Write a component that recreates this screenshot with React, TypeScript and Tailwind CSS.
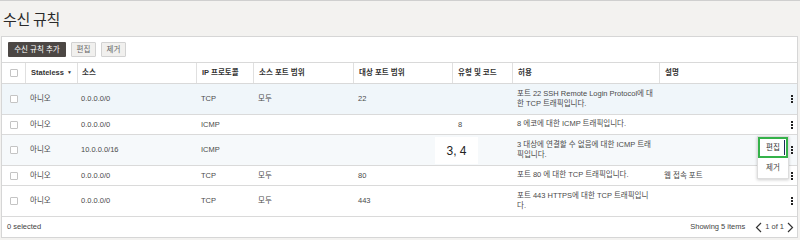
import React from "react";

const GRID =
  "grid grid-cols-[23px_52px_119px_57px_100px_99px_60px_147px_1fr_11px]";

function Check() {
  return (
    <div className="flex items-center justify-center">
      <div className="w-[8px] h-[8px] border border-[#c4c4c4] bg-white rounded-[1px]" />
    </div>
  );
}

function Kebab() {
  return (
    <div className="flex items-center justify-center">
      <div className="flex flex-col gap-[1px]">
        <div className="w-[2px] h-[2px] bg-[#222]" />
        <div className="w-[2px] h-[2px] bg-[#222]" />
        <div className="w-[2px] h-[2px] bg-[#222]" />
      </div>
    </div>
  );
}

type Row = {
  src: string;
  proto: string;
  srcPort: string;
  dstPort: string;
  type: string;
  allow: string[];
  desc: string;
  tall: boolean;
  bg: string;
};

const rows: Row[] = [
  {
    src: "0.0.0.0/0",
    proto: "TCP",
    srcPort: "모두",
    dstPort: "22",
    type: "",
    allow: ["포트 22 SSH Remote Login Protocol에 대", "한 TCP 트래픽입니다."],
    desc: "",
    tall: true,
    bg: "bg-[#f0f6fa]",
  },
  {
    src: "0.0.0.0/0",
    proto: "ICMP",
    srcPort: "",
    dstPort: "",
    type: "8",
    allow: ["8 에코에 대한 ICMP 트래픽입니다."],
    desc: "",
    tall: false,
    bg: "bg-white",
  },
  {
    src: "10.0.0.0/16",
    proto: "ICMP",
    srcPort: "",
    dstPort: "",
    type: "",
    allow: ["3 대상에 연결할 수 없음에 대한 ICMP 트래", "픽입니다."],
    desc: "",
    tall: true,
    bg: "bg-[#f6f9fb]",
  },
  {
    src: "0.0.0.0/0",
    proto: "TCP",
    srcPort: "모두",
    dstPort: "80",
    type: "",
    allow: ["포트 80 에 대한 TCP 트래픽입니다."],
    desc: "웹 접속 포트",
    tall: false,
    bg: "bg-white",
  },
  {
    src: "0.0.0.0/0",
    proto: "TCP",
    srcPort: "모두",
    dstPort: "443",
    type: "",
    allow: ["포트 443 HTTPS에 대한 TCP 트래픽입니", "다."],
    desc: "",
    tall: true,
    bg: "bg-white",
  },
];

export default function App() {
  return (
    <div className="w-[800px] h-[240px] bg-[#f3f2f0] border-t border-[#cfcfcf] font-['Liberation_Sans','Noto_Sans_CJK_KR',sans-serif] text-[#333] overflow-hidden">
      <div className="h-[35px] flex items-center pl-[3px]">
        <h1 className="text-[15px] leading-none tracking-[-0.3px] text-[#2a2a2a] font-['Noto_Sans_CJK_KR',sans-serif]">
          수신 규칙
        </h1>
      </div>
      <div className="ml-[1px] w-[797px] bg-white border border-[#d6d6d6]">
        {/* toolbar */}
        <div className="h-[25px] flex items-center gap-[5px] pl-[6px]">
          <button className="h-[15px] w-[58px] bg-[#4c4744] text-white text-[7.5px] rounded-[1px] leading-none">
            수신 규칙 추가
          </button>
          <button className="h-[15px] w-[25px] bg-[#f1f0ee] border border-[#d2d2d2] text-[#666] text-[7.5px] rounded-[1px] leading-none">
            편집
          </button>
          <button className="h-[15px] w-[25px] bg-[#f1f0ee] border border-[#d2d2d2] text-[#666] text-[7.5px] rounded-[1px] leading-none">
            제거
          </button>
        </div>
        {/* header */}
        <div className={`${GRID} h-[22px] border-t border-b border-[#d9d9d9] text-[7.5px] font-bold text-[#333]`}>
          <Check />
          <div className="border-l border-[#e0e0e0] pl-[5px] flex items-center gap-[3px]">
            Stateless
            <span className="text-[5px]">▼</span>
          </div>
          <div className="border-l border-[#e0e0e0] pl-[4px] flex items-center">소스</div>
          <div className="border-l border-[#e0e0e0] pl-[5px] flex items-center">IP 프로토콜</div>
          <div className="border-l border-[#e0e0e0] pl-[5px] flex items-center">소스 포트 범위</div>
          <div className="border-l border-[#e0e0e0] pl-[5px] flex items-center">대상 포트 범위</div>
          <div className="border-l border-[#e0e0e0] pl-[5px] flex items-center">유형 및 코드</div>
          <div className="border-l border-[#e0e0e0] pl-[5px] flex items-center">허용</div>
          <div className="border-l border-[#e0e0e0] pl-[5px] flex items-center">설명</div>
          <div />
        </div>
        {/* rows */}
        {rows.map((r, i) => (
          <div
            key={i}
            className={`${GRID} relative ${r.tall ? "h-[31px]" : "h-[20px]"} ${r.bg} border-b border-[#dadada] text-[7.5px] text-[#4a4a4a]`}
          >
            <Check />
            <div className="pl-[5px] flex items-center">아니오</div>
            <div className="pl-[4px] flex items-center">{r.src}</div>
            <div className="pl-[5px] flex items-center">{r.proto}</div>
            <div className="pl-[5px] flex items-center">{r.srcPort}</div>
            <div className="pl-[5px] flex items-center">{r.dstPort}</div>
            <div className="pl-[6px] flex items-center">{r.type}</div>
            <div className="pl-[5px] flex flex-col justify-center leading-[10.5px]">
              {r.allow.map((l, k) => (
                <div key={k} className="whitespace-nowrap">
                  {l}
                </div>
              ))}
            </div>
            <div className="pl-[5px] flex items-center">{r.desc}</div>
            <Kebab />
            {i === 2 && (
              <>
                <div className="absolute left-[433px] top-[2px] w-[43px] h-[27px] bg-white flex items-center justify-center text-[12px] text-[#222] font-['Liberation_Sans',sans-serif]">
                  3, 4
                </div>
                <div className="absolute left-[755px] top-[1px] z-10 w-[32px] bg-white shadow-[0_1px_3px_rgba(0,0,0,0.2)] border border-[#ddd]">
                  <div className="h-[21px] border-2 border-[#35b24a] flex items-center justify-center text-[7.5px] text-[#333] relative">
                    편집
                    <div className="absolute right-[1px] top-[1px] bottom-[1px] w-[1px] bg-[#1c2b5a]" />
                  </div>
                  <div className="h-[20px] flex items-center justify-center text-[7.5px] text-[#444]">
                    제거
                  </div>
                </div>
              </>
            )}
          </div>
        ))}
        {/* footer */}
        <div className="h-[20px] flex items-center justify-between pl-[5px] pr-[3px] text-[7.5px] text-[#444]">
          <div>0 selected</div>
          <div className="flex items-center">
            <span className="mr-[10px]">Showing 5 items</span>
            <svg width="7" height="11" viewBox="0 0 7 11" className="mr-[3px]">
              <path d="M6 1 L1.5 5.5 L6 10" fill="none" stroke="#333" strokeWidth="1.2" />
            </svg>
            <span className="mr-[3px]">1 of 1</span>
            <svg width="7" height="11" viewBox="0 0 7 11">
              <path d="M1 1 L5.5 5.5 L1 10" fill="none" stroke="#333" strokeWidth="1.2" />
            </svg>
          </div>
        </div>
      </div>
    </div>
  );
}
